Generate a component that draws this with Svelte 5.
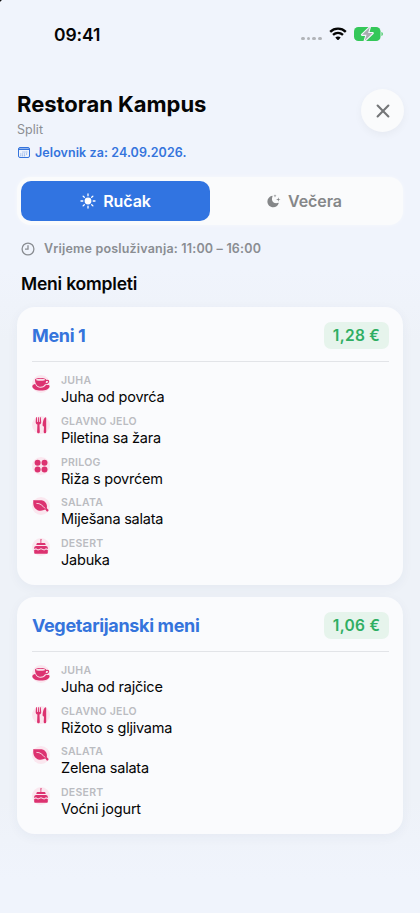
<script>
  let meal = $state("lunch");

  const menus = [
    {
      name: "Meni 1",
      price: "1,28 €",
      items: [
        { type: "soup", label: "Juha", value: "Juha od povrća" },
        { type: "main", label: "Glavno jelo", value: "Piletina sa žara" },
        { type: "side", label: "Prilog", value: "Riža s povrćem" },
        { type: "salad", label: "Salata", value: "Miješana salata" },
        { type: "dessert", label: "Desert", value: "Jabuka" },
      ],
    },
    {
      name: "Vegetarijanski meni",
      price: "1,06 €",
      items: [
        { type: "soup", label: "Juha", value: "Juha od rajčice" },
        { type: "main", label: "Glavno jelo", value: "Rižoto s gljivama" },
        { type: "salad", label: "Salata", value: "Zelena salata" },
        { type: "dessert", label: "Desert", value: "Voćni jogurt" },
      ],
    },
  ];
</script>

{#snippet foodIcon(type)}
  <svg class="food" viewBox="0 0 18 18">
    {#if type === "soup"}
      <path d="M3 4.5C3 2.4 14 2.4 14 4.5L14 5C16.2 4.4 17.6 5.4 17.1 7C16.6 8.5 14.8 9.4 13 9.3C11.9 11 10.6 11.8 8.5 11.8C5.2 11.8 3 9 3 4.5ZM14 6.2L13.7 8.2C15.2 8.1 16 7.3 16.1 6.7C16.2 6.1 15.3 5.9 14 6.2Z" fill-rule="evenodd" />
      <ellipse class="cut" cx="8.5" cy="4.7" rx="4.5" ry="1" />
      <path d="M.3 11.3C.3 10.2 1.4 9.4 3.2 9C4.4 11.6 6 12.7 8.7 12.7C11.2 12.7 12.9 11.8 14 10.1C16.4 9.8 17.6 10 17.6 11.2C17.6 13.9 13.8 15.6 9 15.6C4 15.6.3 13.9.3 11.3Z" />
    {:else if type === "main"}
      <path d="M4 1.3H4.9L5.1 6H5.8L6 1.3H6.8L7 6H7.7L7.9 1.3H8.8L9.2 6.3C9.2 7.6 8.5 8.3 7.5 8.6L7.8 16C7.8 17.8 5.1 17.8 5.1 16L5.4 8.6C4.4 8.3 3.7 7.6 3.7 6.3Z" />
      <path d="M13.8 1.2C14.1 1.2 14.2 1.4 14.2 1.8V16C14.2 17.7 11.7 17.7 11.7 16L12 10.7C11 10.4 10.5 9.8 10.6 8.8C10.8 5.4 12 1.2 13.8 1.2Z" />
    {:else if type === "side"}
      <circle cx="5.6" cy="5.7" r="3" />
      <circle cx="12.5" cy="5.7" r="3" />
      <circle cx="5.6" cy="12.5" r="3" />
      <circle cx="12.5" cy="12.5" r="3" />
    {:else if type === "salad"}
      <path d="M1.4 3C5.3 4.3 11.3 1.3 14.2 6.4C15.1 8.1 15.1 9.9 14.8 11.1C15.5 12.2 16.4 12.4 16.5 13.2C16.6 14.4 15.2 15.1 14.4 14C13.9 13.3 13.6 12.9 13.2 12.6C9.7 14.5 5.3 14 3 11.2C1 8.9 1.1 5.6 1.4 3Z" />
      <path class="line" d="M4.4 6.4C8.2 6.1 10.2 8.4 13 11.4" />
    {:else}
      <path d="M8.6 1.2C9 .6 9.6 1 9.7 1.6C9.7 2 9.5 2.4 9.3 2.5V5H12.2C13.1 5 13.6 5.6 13.6 6.4V7H4.4V6.4C4.4 5.6 5 5 5.8 5H8.5V2.4C8.2 2.1 8.2 1.6 8.6 1.2ZM4.2 8H13.8C15 8 15.8 8.8 15.8 10V11L14 10.3L12.2 11.4L9 10.2L6 11.4L4 10.3L2.2 11V10C2.2 8.8 3 8 4.2 8ZM2.2 12L4 11.4L6 12.5L9 11.3L12.2 12.5L14 11.4L15.8 12V14.8C15.8 15.4 15.3 15.8 14.7 15.8H3.3C2.7 15.8 2.2 15.4 2.2 14.8Z" />
    {/if}
  </svg>
{/snippet}

<div class="screen">
  <div class="status-bar">
    <span class="time">09:41</span>
    <div class="status-icons">
      <div class="signal"><i></i><i></i><i></i><i></i></div>
      <svg class="wifi" width="18" height="14" viewBox="0 0 18 14">
        <path d="M1.2 4.8C5.6.6 12.4.6 16.8 4.8" />
        <path d="M4 7.8C7 5.2 11 5.2 14 7.8" />
        <path class="dot" d="M6.3 10.6C7.8 9.2 10.2 9.2 11.7 10.6L9.7 12.8Q9 13.4 8.3 12.8Z" />
      </svg>
      <svg class="battery" width="29" height="16" viewBox="0 0 29 16">
        <rect x="0" y="1" width="26.5" height="14" rx="4.3" fill="#34c759" />
        <path d="M27.5 6V10C29.2 9.4 29.2 6.6 27.5 6Z" fill="#34c759" />
        <path d="M15.8 1.2L8 8.8H12.6L10.7 14.8L18.7 7.1H14.1Z" fill="#a9acb0" stroke="#f1f7fa" stroke-width="2.2" stroke-linejoin="round" paint-order="stroke" />
      </svg>
    </div>
  </div>

  <header>
    <div>
      <h1>Restoran Kampus</h1>
      <p class="city">Split</p>
      <p class="date">
        <svg width="12" height="11" viewBox="0 0 12 11">
          <rect x=".5" y=".5" width="11" height="10" rx="1.5" fill="none" stroke="currentColor" />
          <path d="M.5 1.5H11.5V3H.5Z" fill="currentColor" />
          <path d="M4.5 5H10M2.3 7H10M2.3 8.8H7.5" stroke="currentColor" stroke-dasharray="1 .9" opacity=".65" />
        </svg>
        <span>Jelovnik za: 24.09.2026.</span>
      </p>
    </div>
    <button class="close" aria-label="Zatvori">
      <svg width="14" height="14" viewBox="0 0 14 14">
        <path d="M1.6 1.6L12.4 12.4M12.4 1.6L1.6 12.4" />
      </svg>
    </button>
  </header>

  <div class="tabs">
    <button class:active={meal === "lunch"} onclick={() => (meal = "lunch")}>
      <svg width="16" height="16" viewBox="0 0 16 16">
        <circle cx="8" cy="8" r="3.4" fill="currentColor" />
        <path d="M8 1V2.8M8 13.2V15M1 8H2.8M13.2 8H15M3.1 3.1L4.3 4.3M11.7 11.7L12.9 12.9M12.9 3.1L11.7 4.3M4.3 11.7L3.1 12.9" stroke="currentColor" stroke-width="1.3" stroke-linecap="round" />
      </svg>
      <span>Ručak</span>
    </button>
    <button class:active={meal === "dinner"} onclick={() => (meal = "dinner")}>
      <svg width="14" height="16" viewBox="0 0 14 16">
        <path d="M5.1 2.8C5.4 2.7 5.7 3 5.5 3.4C3.6 8 6.8 11.2 11.2 9.8C11.6 9.7 11.8 10 11.7 10.3C10.9 12.8 8.8 14.2 6.4 14.2C3 14.2.4 11.7.4 8.4C.4 5.8 2.2 3.6 5.1 2.8Z" fill="currentColor" />
        <path d="M11.3 4.2L11.8 6L13.5 6.5L11.8 7L11.3 8.8L10.8 7L9 6.5L10.8 6ZM8 1.2L8.4 2.4L9.5 2.8L8.4 3.2L8 4.4L7.6 3.2L6.5 2.8L7.6 2.4Z" fill="currentColor" />
      </svg>
      <span>Večera</span>
    </button>
  </div>

  <div class="hours">
    <svg width="14" height="14" viewBox="0 0 14 14">
      <circle cx="7" cy="7" r="5.9" />
      <path d="M7 3.2V7.2H4" />
    </svg>
    <span>Vrijeme posluživanja: 11:00 – 16:00</span>
  </div>

  <h2>Meni kompleti</h2>

  <div class="menus">
    {#each menus as menu}
      <section class="card">
        <div class="card-head">
          <h3>{menu.name}</h3>
          <span class="price">{menu.price}</span>
        </div>
        <ul>
          {#each menu.items as item}
            <li>
              <div class="icon">{@render foodIcon(item.type)}</div>
              <div>
                <div class="label">{item.label}</div>
                <div class="value">{item.value}</div>
              </div>
            </li>
          {/each}
        </ul>
      </section>
    {/each}
  </div>
</div>

<style>
  :global(body) {
    background: #f0f4fc;
  }

  .screen {
    box-sizing: border-box;
    width: 420px;
    height: 913px;
    padding: 0 17px;
    overflow: hidden;
    font-family: Inter, "Liberation Sans", sans-serif;
    color: #050505;
    background:
      radial-gradient(circle at 0 0, #111 1px, transparent 2px),
      linear-gradient(#f0f4fc 0, #f0f4fc 270px, #eef2f8 340px, #eef2f8 800px, #f0f4fc 880px);
  }

  h1, h2, h3, p, ul {
    margin: 0;
    padding: 0;
    white-space: nowrap;
  }

  svg {
    display: block;
    flex: none;
  }

  button {
    padding: 0;
    border: 0;
    font: inherit;
  }

  .status-bar {
    display: flex;
    justify-content: space-between;
    height: 68px;
    padding: 0 20px 0 37px;
    align-items: center;
  }

  .time {
    font-size: 17.5px;
    font-weight: 600;
    letter-spacing: -0.1px;
  }

  .status-icons {
    display: flex;
    align-items: center;
  }

  .signal {
    display: flex;
    gap: 2px;
    margin: 9px 7px 0 0;
  }

  .signal i {
    width: 3.8px;
    height: 3.8px;
    border-radius: 50%;
    background: #b1b4b9;
  }

  .wifi {
    margin-right: 7px;
    fill: none;
    stroke: #050505;
    stroke-width: 2.4;
  }

  .wifi .dot {
    fill: #050505;
    stroke: none;
  }

  header {
    display: flex;
    justify-content: space-between;
    padding-top: 21px;
    height: 88px;
  }

  h1 {
    font-size: 22px;
    line-height: 30px;
    font-weight: 700;
    letter-spacing: -0.03px;
  }

  .city {
    margin-top: 3px;
    font-size: 12.5px;
    line-height: 16px;
    letter-spacing: 0.05px;
    color: #8c8e93;
  }

  .date {
    display: flex;
    align-items: center;
    gap: 5px;
    margin-top: 6px;
    padding-left: 1px;
    font-size: 12.5px;
    line-height: 17px;
    font-weight: 600;
    letter-spacing: 0.08px;
    color: #3574dc;
  }

  .close {
    display: grid;
    place-items: center;
    width: 43px;
    height: 43px;
    margin-right: -1px;
    border-radius: 50%;
    background: #fafbfc;
    box-shadow: 0 3px 9px #0000000b;
  }

  .close path {
    stroke: #747678;
    stroke-width: 2.1;
    stroke-linecap: round;
  }

  .tabs {
    display: flex;
    box-sizing: border-box;
    height: 48px;
    padding: 4px;
    border-radius: 14px;
    background: #fafbfc;
    box-shadow: 0 0 4px #ffffff80;
  }

  .tabs button {
    display: flex;
    flex: 1;
    align-items: center;
    justify-content: center;
    gap: 7px;
    border-radius: 10px;
    background: none;
    color: #858789;
    font-size: 16px;
    font-weight: 600;
    letter-spacing: -0.1px;
  }

  .tabs .active {
    background: #3174e1;
    color: #fff;
  }

  .hours {
    display: flex;
    align-items: center;
    gap: 9px;
    height: 17px;
    margin: 15px 0 0 4px;
    font-size: 12.5px;
    font-weight: 600;
    letter-spacing: 0.19px;
    color: #8a8d92;
  }

  .hours svg {
    fill: none;
    stroke: currentColor;
    stroke-width: 1.3;
  }

  h2 {
    margin: 15px 0 0 4px;
    font-size: 17.5px;
    line-height: 24px;
    font-weight: 600;
    letter-spacing: -0.2px;
  }

  .menus {
    display: flex;
    flex-direction: column;
    gap: 12px;
    margin-top: 11px;
  }

  .card {
    padding: 15px 14px 7px 15px;
    border-radius: 18px;
    background: #fafbfd;
    box-shadow: 0 3px 12px #2f466b0c;
  }

  .card-head {
    display: flex;
    justify-content: space-between;
    align-items: flex-start;
    height: 39px;
    border-bottom: 1px solid #e2e4e8;
  }

  h3 {
    font-size: 18px;
    line-height: 27px;
    font-weight: 650;
    letter-spacing: -0.35px;
    color: #3574dc;
  }

  .price {
    width: 65px;
    border-radius: 7px;
    background: #e6f4ec;
    color: #2fae63;
    font-size: 15.5px;
    line-height: 27px;
    font-weight: 600;
    letter-spacing: 0.3px;
    text-align: center;
    white-space: nowrap;
  }

  ul {
    padding-top: 12px;
    list-style: none;
  }

  li {
    display: flex;
    gap: 11px;
    height: 40.75px;
  }

  .icon {
    width: 18px;
    height: 18px;
    margin-top: 1px;
    border-radius: 50%;
    background: #fae7ef;
  }

  .food {
    width: 18px;
    height: 18px;
    fill: #dc3270;
  }

  .food .cut {
    fill: #f9dfe9;
  }

  .food .line {
    fill: none;
    stroke: #f9dfe9;
    stroke-width: 0.9;
  }

  .label {
    font-size: 10.5px;
    line-height: 13px;
    font-weight: 600;
    letter-spacing: 0.25px;
    text-transform: uppercase;
    color: #babcc1;
  }

  .value {
    font-size: 14.5px;
    line-height: 20px;
    letter-spacing: -0.22px;
  }
</style>
